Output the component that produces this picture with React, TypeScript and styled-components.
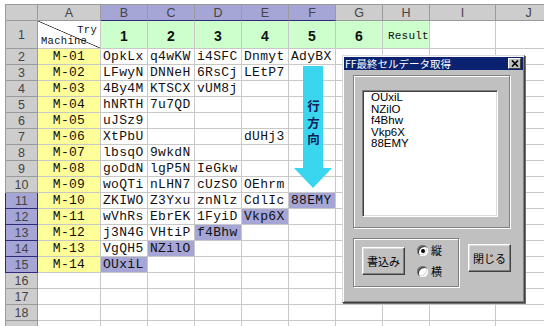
import React from 'react'
import styled, { createGlobalStyle } from 'styled-components'

const GlobalStyle = createGlobalStyle`
  html, body {
    margin: 0;
    padding: 0;
    background: #fff;
  }
  body {
    width: 544px;
    height: 326px;
    overflow: hidden;
    font-family: "Liberation Sans", "Noto Sans CJK JP", sans-serif;
  }
`

const Page = styled.div`
  position: relative;
  width: 544px;
  height: 326px;
  overflow: hidden;
  box-sizing: border-box;
  padding: 4px 0 0 5px;
  background: #fff;
`

const Sheet = styled.div`
  display: grid;
  grid-template-columns: 33px 63px repeat(7, 47px) 66px 66px;
  grid-template-rows: 17px 28px repeat(18, 16px);
`

const Head = styled.div<{ $sel?: boolean; $row?: boolean; $top?: boolean }>`
  box-sizing: border-box;
  display: flex;
  align-items: center;
  justify-content: center;
  background: ${p => (p.$sel ? '#a6a6d6' : '#cdcdcd')};
  border-right: 1px solid ${p => (p.$sel && p.$row ? '#2c2c7a' : '#9a9a9a')};
  border-bottom: 1px solid ${p => (p.$sel ? '#2c2c7a' : '#9a9a9a')};
  border-left: ${p => (p.$row ? `1px solid ${p.$sel ? '#2c2c7a' : '#9a9a9a'}` : '0')};
  border-top: ${p => (p.$top ? '1px solid #9a9a9a' : '0')};
  font-family: "Liberation Sans", Arial, sans-serif;
  font-size: 12.5px;
  color: #444;
`

const Cell = styled.div<{ $bg?: string; $center?: boolean }>`
  box-sizing: border-box;
  border-right: 1px solid #c8c8c8;
  border-bottom: 1px solid #c8c8c8;
  background: ${p => p.$bg ?? '#fff'};
  font-family: "Liberation Mono", "DejaVu Sans Mono", monospace;
  font-size: 13px;
  letter-spacing: 0.3px;
  line-height: 15px;
  padding: 0 2px;
  white-space: nowrap;
  overflow: hidden;
  text-align: ${p => (p.$center ? 'center' : 'left')};
  color: #111;
`

const NumCell = styled(Cell)`
  display: flex;
  align-items: center;
  justify-content: center;
  padding-top: 4px;
  font-family: "Liberation Sans", Arial, sans-serif;
  font-weight: bold;
  font-size: 14px;
  letter-spacing: 0;
`

const ResultCell = styled(Cell)`
  display: flex;
  align-items: center;
  padding-top: 4px;
  padding-left: 5px;
  font-size: 11px;
  letter-spacing: 0.2px;
`

const Corner = styled(Cell)`
  display: flex;
  flex-direction: column;
  justify-content: space-between;
  padding: 4px 3px 1px 3px;
  font-size: 10.5px;
  letter-spacing: 0.3px;
  line-height: 11px;
  background: linear-gradient(
    to top right,
    transparent calc(50% - 0.7px),
    #222 50%,
    transparent calc(50% + 0.7px)
  ), #fff;
`

const Try = styled.span`
  align-self: flex-end;
`

const ArrowWrap = styled.div`
  position: absolute;
  left: 294px;
  top: 66px;
  width: 38px;
  height: 123px;
  display: flex;
  justify-content: center;
  padding-top: 34px;
  box-sizing: border-box;
`

const ArrowSvg = styled.svg`
  position: absolute;
  inset: 0;
`

const ArrowLabel = styled.span`
  position: relative;
  writing-mode: vertical-rl;
  font-family: "Noto Sans CJK JP", sans-serif;
  font-weight: bold;
  font-size: 12.5px;
  letter-spacing: 4px;
  line-height: 14px;
  color: #12205a;
`

const Dialog = styled.div`
  position: absolute;
  left: 342px;
  top: 55px;
  width: 183px;
  height: 248px;
  box-sizing: border-box;
  display: flex;
  flex-direction: column;
  padding: 1px;
  background: #c0c0c0;
  border: 1px solid;
  border-color: #dcdcdc #404040 #404040 #dcdcdc;
  box-shadow: inset 1px 1px 0 #fff, inset -1px -1px 0 #808080, 1px 1px 0 #707070;
`

const TitleBar = styled.div`
  height: 13px;
  display: flex;
  align-items: center;
  justify-content: space-between;
  padding: 0 2px 0 1px;
  background: #0a2270;
`

const Title = styled.span`
  font-family: "Noto Sans CJK JP", sans-serif;
  font-size: 10.5px;
  line-height: 13px;
  color: #fff;
`

const CloseBox = styled.div`
  width: 13px;
  height: 11px;
  box-sizing: border-box;
  display: flex;
  align-items: center;
  justify-content: center;
  background: #c0c0c0;
  border: 1px solid;
  border-color: #fff #404040 #404040 #fff;
`

const Body = styled.div`
  display: flex;
  flex-direction: column;
  padding: 5px 0 0 9px;
`

const Frame = styled.div`
  box-sizing: border-box;
  border: 1px solid #808080;
  box-shadow: inset 1px 1px 0 #fff, 1px 1px 0 #fff;
`

const ListFrame = styled(Frame)`
  width: 157px;
  height: 153px;
  padding: 14px 0 0 8px;
`

const ListBox = styled.div`
  box-sizing: border-box;
  width: 136px;
  height: 127px;
  padding: 1px 0 0 8px;
  background: #fff;
  border: 1px solid;
  border-color: #808080 #fff #fff #808080;
  box-shadow: inset 1px 1px 0 #404040, inset -1px -1px 0 #dcdcdc;
  font-family: "Liberation Sans", Arial, sans-serif;
  font-size: 11.5px;
  line-height: 11.5px;
  color: #000;
`

const BottomRow = styled.div`
  display: flex;
  align-items: flex-start;
  gap: 9px;
  margin-top: 10px;
`

const OptFrame = styled(Frame)`
  width: 106px;
  height: 49px;
  display: flex;
  align-items: center;
  gap: 12px;
  padding: 0 0 3px 8px;
`

const Button = styled.div`
  box-sizing: border-box;
  width: 43px;
  height: 28px;
  display: flex;
  align-items: center;
  justify-content: center;
  background: #c0c0c0;
  border: 1px solid;
  border-color: #fff #404040 #404040 #fff;
  box-shadow: inset -1px -1px 0 #808080, inset 1px 1px 0 #dcdcdc;
  font-family: "Noto Sans CJK JP", sans-serif;
  font-size: 11px;
  color: #000;
`

const CloseButton = styled(Button)`
  margin-top: 6px;
`

const RadioCol = styled.div`
  display: flex;
  flex-direction: column;
  gap: 8px;
`

const RadioRow = styled.div`
  display: flex;
  align-items: center;
  gap: 3px;
  font-family: "Noto Sans CJK JP", sans-serif;
  font-size: 11px;
  line-height: 13px;
  color: #000;
`

const Radio = styled.span<{ $on?: boolean }>`
  position: relative;
  width: 11px;
  height: 11px;
  border-radius: 50%;
  background: #fff;
  box-shadow: inset 1px 1px 0 #808080, inset 2px 2px 0 #404040, inset -1px -1px 0 #fff,
    inset -2px -2px 0 #dcdcdc;
  &::after {
    content: '';
    display: ${p => (p.$on ? 'block' : 'none')};
    position: absolute;
    left: 4px;
    top: 4px;
    width: 4px;
    height: 4px;
    border-radius: 50%;
    background: #000;
  }
`

const cols = ['A', 'B', 'C', 'D', 'E', 'F', 'G', 'H', 'I', 'J']
const selCols = new Set(['B', 'C', 'D', 'E', 'F'])

const data: string[][] = [
  ['OpkLx', 'q4wKW', 'i4SFC', 'Dnmyt', 'AdyBX'],
  ['LFwyN', 'DNNeH', '6RsCj', 'LEtP7'],
  ['4By4M', 'KTSCX', 'vUM8j'],
  ['hNRTH', '7u7QD'],
  ['uJSz9'],
  ['XtPbU', '', '', 'dUHj3'],
  ['lbsqO', '9wkdN'],
  ['goDdN', 'lgP5N', 'IeGkw'],
  ['woQTi', 'nLHN7', 'cUzSO', 'OEhrm'],
  ['ZKIWO', 'Z3Yxu', 'znNlz', 'CdlIc', '88EMY'],
  ['wVhRs', 'EbrEK', '1FyiD', 'Vkp6X'],
  ['j3N4G', 'VHtiP', 'f4Bhw'],
  ['VgQH5', 'NZilO'],
  ['OUxiL'],
]

const results = ['OUxiL', 'NZilO', 'f4Bhw', 'Vkp6X', '88EMY']

const GREEN = '#ccffcc'
const YELLOW = '#ffff99'
const HILITE = '#a6a6d6'

export default function App() {
  const rows: React.ReactNode[] = []

  // column headers
  rows.push(<Head key="h0" $top $row />)
  cols.forEach(c => (
    rows.push(<Head key={'h' + c} $top $sel={selCols.has(c)}>{c}</Head>)
  ))

  // row 1
  rows.push(<Head key="r1" $row>1</Head>)
  rows.push(
    <Corner key="c1">
      <Try>Try</Try>
      <span>Machine</span>
    </Corner>
  )
  for (let i = 1; i <= 6; i++) rows.push(<NumCell key={'n' + i} $bg={GREEN}>{i}</NumCell>)
  rows.push(<ResultCell key="res" $bg={GREEN}>Result</ResultCell>)
  rows.push(<Cell key="i1" />, <Cell key="j1" />)

  // rows 2..19 (19 only peeks in at the bottom edge)
  for (let r = 2; r <= 19; r++) {
    const sel = r >= 11 && r <= 15
    rows.push(<Head key={'r' + r} $row $sel={sel}>{r < 19 ? r : ''}</Head>)
    const d = data[r - 2]
    rows.push(
      <Cell key={'a' + r} $center $bg={d ? YELLOW : undefined}>
        {d ? `M-${String(r - 1).padStart(2, '0')}` : ''}
      </Cell>
    )
    for (let c = 0; c < 9; c++) {
      const text = d && c < 5 ? d[c] ?? '' : ''
      const hl = c === 15 - r && c < 5
      rows.push(<Cell key={`d${r}-${c}`} $bg={hl ? HILITE : undefined}>{text}</Cell>)
    }
  }

  return (
    <>
      <GlobalStyle />
      <Page>
        <Sheet>{rows}</Sheet>

        <ArrowWrap>
          <ArrowSvg width="38" height="123" viewBox="0 0 38 123">
            <polygon points="9,0 29,0 29,102 38,102 19,122 0,102 9,102" fill="#3ad6ef" />
          </ArrowSvg>
          <ArrowLabel>行方向</ArrowLabel>
        </ArrowWrap>

        <Dialog>
          <TitleBar>
            <Title>FF最終セルデータ取得</Title>
            <CloseBox>
              <svg width="8" height="7" viewBox="0 0 8 7">
                <path d="M1 0.5 L7 6.5 M7 0.5 L1 6.5" stroke="#000" strokeWidth="1.6" />
              </svg>
            </CloseBox>
          </TitleBar>
          <Body>
            <ListFrame>
              <ListBox>
                {results.map(t => (
                  <div key={t}>{t}</div>
                ))}
              </ListBox>
            </ListFrame>
            <BottomRow>
              <OptFrame>
                <Button>書込み</Button>
                <RadioCol>
                  <RadioRow>
                    <Radio $on />
                    縦
                  </RadioRow>
                  <RadioRow>
                    <Radio />
                    横
                  </RadioRow>
                </RadioCol>
              </OptFrame>
              <CloseButton>閉じる</CloseButton>
            </BottomRow>
          </Body>
        </Dialog>
      </Page>
    </>
  )
}
